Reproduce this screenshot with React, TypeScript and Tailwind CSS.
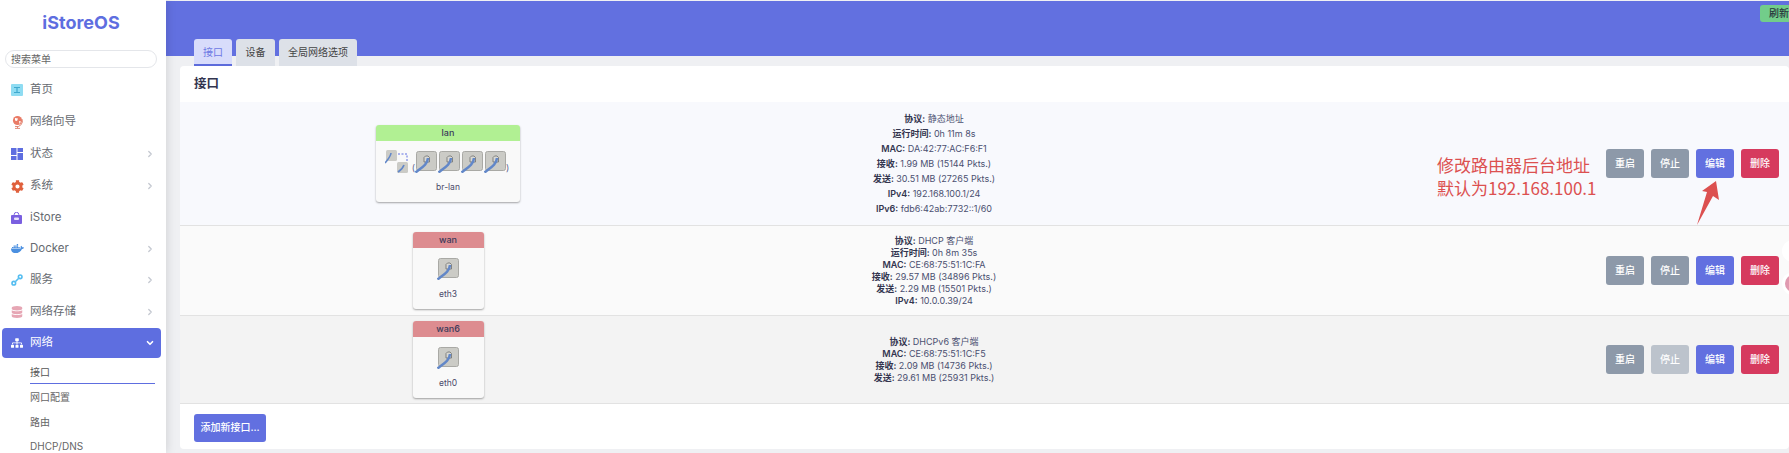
import React from "react";
import { ChevronDown, ChevronRight } from "lucide-react";
import { FaCog, FaDatabase, FaDocker, FaSitemap } from "react-icons/fa";

type MenuItem = {
	label: string;
	icon: React.ReactNode;
	arrow?: boolean;
	h: string;
};

function HomeIcon() {
	return (
		<svg width="12" height="12" viewBox="0 0 12 12">
			<rect width="12" height="12" rx="1" fill="#8fdcf2" />
			<path d="M3 3h6v1H6.6v4H9v1H3V8h2.4V4H3z" fill="#3fa9cf" />
		</svg>
	);
}

function WizardIcon() {
	return (
		<svg width="13" height="14" viewBox="0 0 13 14">
			<circle cx="6.5" cy="5.5" r="4.6" fill="#ea7b66" />
			<path d="M4 3l3 .5L6 6l-2-.5zM8 6l2 .5L8.5 9z" fill="#fff" />
			<path d="M11 4a5.6 5.6 0 0 1-7 7.4M6.5 11v2M4 13.4h5" stroke="#e08a78" fill="none" />
		</svg>
	);
}

function StatusIcon() {
	return (
		<svg width="12" height="12" viewBox="0 0 12 12" fill="#5e6ee0">
			<rect width="5.5" height="7" />
			<rect x="6.5" width="5.5" height="4" />
			<rect y="8" width="5.5" height="4" />
			<rect x="6.5" y="5" width="5.5" height="7" />
		</svg>
	);
}

function StoreIcon() {
	return (
		<svg width="11" height="12" viewBox="0 0 11 12">
			<path d="M3.2 4V2.6a2.3 2.3 0 0 1 4.6 0V4" stroke="#7a5fe0" fill="none" />
			<rect y="3" width="11" height="9" rx="1" fill="#7a5fe0" />
			<rect x="3" y="5.5" width="5" height="2.5" rx="1" fill="#e8e2fb" />
		</svg>
	);
}

function ServiceIcon() {
	return (
		<svg width="12" height="12" viewBox="0 0 12 12" fill="none" stroke="#54bdf0" strokeWidth="1.6">
			<circle cx="2.8" cy="9.2" r="1.8" />
			<circle cx="9.2" cy="2.8" r="1.8" />
			<path d="M4.5 7.5l3-3" />
		</svg>
	);
}

const menu: MenuItem[] = [
	{ label: "首页", icon: <HomeIcon />, h: "h-[32px]" },
	{ label: "网络向导", icon: <WizardIcon />, h: "h-[32px]" },
	{ label: "状态", icon: <StatusIcon />, arrow: true, h: "h-[32px]" },
	{ label: "系统", icon: <FaCog className="text-[13px] text-[#e0603c]" />, arrow: true, h: "h-[32px]" },
	{ label: "iStore", icon: <StoreIcon />, h: "h-[31px]" },
	{ label: "Docker", icon: <FaDocker className="text-[13px] text-[#4a8fe0]" />, arrow: true, h: "h-[31px]" },
	{ label: "服务", icon: <ServiceIcon />, arrow: true, h: "h-[32px]" },
	{ label: "网络存储", icon: <FaDatabase className="text-[12px] text-[#e6a6b4]" />, arrow: true, h: "h-[32px]" },
];

function Port() {
	return (
		<svg width="22" height="22" viewBox="0 0 22 22" className="block">
			<rect x="1.5" y="0.5" width="20" height="19" rx="2" fill="#cbcbc6" stroke="#a9a9a5" />
			<path d="M9 11V6.5l1.5-1.5h2.5L14.5 6.5V11z" fill="#d8d8d4" stroke="#6f6f6c" strokeWidth="0.8" />
			<path d="M13 7C12.5 14 6 17 0.5 21.5" stroke="#6287c8" strokeWidth="2.6" fill="none" />
		</svg>
	);
}

function BridgeIcon() {
	return (
		<svg width="24" height="23" viewBox="0 0 24 23" className="block">
			<rect x="1" y="0" width="11" height="11" rx="1.5" fill="#cbcbc6" />
			<path d="M6 3C5.5 7 3 9 0 13" stroke="#6287c8" strokeWidth="1.6" fill="none" />
			<rect x="12" y="12" width="11" height="11" rx="1.5" fill="#cbcbc6" />
			<path d="M19 15c-1 3-3 5-6 7" stroke="#6287c8" strokeWidth="1.6" fill="none" />
			<path d="M13 4h9v8" stroke="#5e6ee0" strokeDasharray="2 1.5" fill="none" />
		</svg>
	);
}

function IfaceBox({ name, color, device, wide, ports }: { name: string; color: string; device: string; wide?: boolean; ports: number }) {
	return (
		<div className={`flex flex-col rounded-[3px] bg-[#f9f9f9] shadow-[0_1px_2px_rgba(0,0,0,0.35)] ${wide ? "w-[144px]" : "w-[71px]"}`}>
			<div className={`h-[16px] rounded-t-[3px] text-center text-[9px] leading-[15px] font-medium text-[#3a3a5a] ${color}`}>{name}</div>
			{wide ? (
				<div className="mt-[9px] flex items-end justify-center pr-[2px] text-[9px] text-[#5c6490]">
					<BridgeIcon />
					<span className="ml-[3px] leading-[10px]">(</span>
					<span className="flex gap-[1px]">
						{Array.from({ length: ports }).map((_, i) => (
							<Port key={i} />
						))}
					</span>
					<span className="leading-[10px]">)</span>
				</div>
			) : (
				<div className="mt-[10px] flex justify-center">
					<Port />
				</div>
			)}
			<div className="mt-[8px] mb-[9px] text-center text-[8.5px] leading-[12px] text-[#4a4a6a]">{device}</div>
		</div>
	);
}

function Info({ lines, lh }: { lines: [string, string][]; lh: string }) {
	return (
		<div className={`text-center text-[9px] text-[#4a4f70] ${lh}`}>
			{lines.map(([k, v]) => (
				<div key={k}>
					<b className="font-semibold text-[#33354f]">{k}:</b> {v}
				</div>
			))}
		</div>
	);
}

function Btn({ label, color }: { label: string; color: string }) {
	return <button className={`h-[29px] w-[38px] rounded-[3px] text-[10px] font-medium text-white ${color}`}>{label}</button>;
}

const rows = [
	{
		name: "lan",
		color: "bg-[#b1f093]",
		device: "br-lan",
		wide: true,
		ports: 4,
		bg: "bg-[#f8f9fd] h-[124px]",
		lh: "leading-[15px]",
		stopColor: "bg-[#8d99a9]",
		lines: [
			["协议", "静态地址"],
			["运行时间", "0h 11m 8s"],
			["MAC", "DA:42:77:AC:F6:F1"],
			["接收", "1.99 MB (15144 Pkts.)"],
			["发送", "30.51 MB (27265 Pkts.)"],
			["IPv4", "192.168.100.1/24"],
			["IPv6", "fdb6:42ab:7732::1/60"],
		] as [string, string][],
	},
	{
		name: "wan",
		color: "bg-[#dd8c90]",
		device: "eth3",
		ports: 1,
		bg: "bg-[#fafafa] h-[90px]",
		lh: "leading-[12px]",
		stopColor: "bg-[#8d99a9]",
		lines: [
			["协议", "DHCP 客户端"],
			["运行时间", "0h 8m 35s"],
			["MAC", "CE:68:75:51:1C:FA"],
			["接收", "29.57 MB (34896 Pkts.)"],
			["发送", "2.29 MB (15501 Pkts.)"],
			["IPv4", "10.0.0.39/24"],
		] as [string, string][],
	},
	{
		name: "wan6",
		color: "bg-[#dd8c90]",
		device: "eth0",
		ports: 1,
		bg: "bg-[#f3f3f3] h-[88px]",
		lh: "leading-[12px]",
		stopColor: "bg-[#bcc3cc]",
		lines: [
			["协议", "DHCPv6 客户端"],
			["MAC", "CE:68:75:51:1C:F5"],
			["接收", "2.09 MB (14736 Pkts.)"],
			["发送", "29.61 MB (25931 Pkts.)"],
		] as [string, string][],
	},
];

export default function App() {
	return (
		<div className="relative flex h-[453px] w-[1789px] overflow-hidden bg-[#eff0f3] font-[Inter,'Noto_Sans_CJK_SC',sans-serif]">
			<aside className="z-10 flex w-[166px] shrink-0 flex-col bg-white shadow-[0_0_10px_rgba(0,0,0,0.15)]">
				<div className="mt-[11px] pr-[4px] text-center text-[18px] leading-[24px] font-bold text-[#5e6ee0]">iStoreOS</div>
				<input
					readOnly
					placeholder="搜索菜单"
					className="mt-[15px] ml-[5px] h-[18px] w-[152px] rounded-full border border-[#e4e6ea] px-[5px] text-[10px] outline-none placeholder:text-[#666]"
				/>
				<nav className="mt-[6px] flex flex-col">
					{menu.map((m) => (
						<div key={m.label} className={`flex items-center pl-[11px] pr-[11px] text-[11.5px] text-[#666a70] ${m.h}`}>
							<span className="flex w-[19px] shrink-0">{m.icon}</span>
							<span className="flex-1">{m.label}</span>
							{m.arrow && <ChevronRight size={10} strokeWidth={3} className="text-[#c4c8d0]" />}
						</div>
					))}
					<div className="ml-[2px] flex h-[30px] w-[159px] items-center rounded-[4px] bg-[#5e6ee0] pl-[9px] pr-[6px] text-[11.5px] text-white">
						<FaSitemap className="w-[19px] shrink-0 pr-[7px] text-[12px]" />
						<span className="flex-1">网络</span>
						<ChevronDown size={10} strokeWidth={4} />
					</div>
					<div className="mt-[7px] ml-[30px] w-[125px] border-b border-[#5e6ee0] pb-[4px] text-[10px] leading-[14px] text-[#555]">接口</div>
					<div className="mt-[6px] ml-[30px] text-[10px] leading-[14px] text-[#666]">网口配置</div>
					<div className="mt-[11px] ml-[30px] text-[10px] leading-[14px] text-[#666]">路由</div>
					<div className="mt-[10px] ml-[30px] text-[10px] leading-[14px] text-[#666]">DHCP/DNS</div>
				</nav>
			</aside>

			<main className="flex min-w-0 flex-1 flex-col">
				<header className="mt-[1px] flex h-[55px] shrink-0 flex-col bg-[#6270e0] pt-[4px]">
					<button className="h-[17px] w-[29px] self-end rounded-l-[3px] bg-[#72cd8a] pl-[9px] text-left text-[10px] leading-[17px] font-medium whitespace-nowrap text-[#26323c]">刷新</button>
					<div className="mt-[17px] ml-[28px] flex gap-[4px] text-[10px]">
						<div className="h-[27px] w-[38px] rounded-t-[3px] border-b-2 border-[#5c6bdb] bg-[#d8dcfb] text-center leading-[26px] text-[#6c78e4]">接口</div>
						<div className="h-[27px] w-[39px] rounded-t-[3px] bg-[#dde1e8] text-center leading-[26px] text-[#444]">设备</div>
						<div className="h-[27px] w-[78px] rounded-t-[3px] bg-[#dde1e8] text-center leading-[26px] text-[#444]">全局网络选项</div>
					</div>
				</header>

				<section className="mt-[10px] ml-[14px] flex h-[383px] flex-col rounded-[4px] bg-white">
					<h2 className="flex h-[36px] shrink-0 items-center pl-[14px] text-[12.5px] font-bold text-[#33354f]">接口</h2>
					{rows.map((r) => (
						<div key={r.name} className={`grid shrink-0 grid-cols-[536px_436px_1fr] items-center border-b border-[#e2e2e2] ${r.bg}`}>
							<div className="flex justify-center">
								<IfaceBox name={r.name} color={r.color} device={r.device} wide={r.wide} ports={r.ports} />
							</div>
							<Info lines={r.lines} lh={r.lh} />
							<div className="flex justify-end gap-[7px] pr-[10px]">
								<Btn label="重启" color="bg-[#8d99a9]" />
								<Btn label="停止" color={r.stopColor} />
								<Btn label="编辑" color="bg-[#6270e0]" />
								<Btn label="删除" color="bg-[#d63a5e]" />
							</div>
						</div>
					))}
					<div className="pt-[9px] pl-[14px]">
						<button className="h-[28px] w-[72px] rounded-[3px] bg-[#6270e0] text-[10px] font-medium text-white">添加新接口...</button>
					</div>
				</section>
			</main>

			{/* annotation drawn on top of the screenshot */}
			<div className="absolute top-[153px] left-[1437px] font-['Noto_Sans_CJK_SC',sans-serif] text-[17px] leading-[23px] whitespace-nowrap text-[#dc5050]">
				<div>修改路由器后台地址</div>
				<div>默认为192.168.100.1</div>
			</div>
			<svg className="absolute top-[178px] left-[1694px]" width="28" height="50" viewBox="0 0 28 50">
				<polygon points="22,3 25,22 19,18 3,47 13,14 8,13" fill="#dc5050" />
			</svg>

			<div className="absolute top-[240px] left-[1782px] h-[22px] w-[22px] rounded-full bg-white" />
			<div className="absolute top-[272px] left-[1782px] flex h-[23px] w-[23px] items-center justify-center rounded-full bg-white">
				<div className="h-[17px] w-[17px] rounded-full bg-[#e09ab0]" />
			</div>
		</div>
	);
}
